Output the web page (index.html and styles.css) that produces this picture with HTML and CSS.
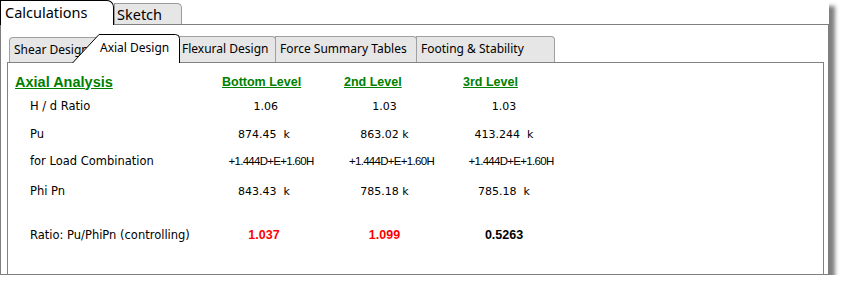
FILE: index.html
```html
<!DOCTYPE html>
<html>
<head>
  <meta charset="UTF-8" />
  <title>Calculations - Axial Design</title>
  <link rel="stylesheet" href="styles.css">
</head>
<body>

  <div class="window">
    <div class="maintabs">
      <div class="maintab actiu">Calculations</div>
      <div class="maintab">Sketch</div>
    </div>

    <div class="marc">
      <div class="subtabs">
        <div class="subtab primer">Shear Design</div>
        <div class="subtab actiu">Axial Design</div>
        <div class="subtab flex">Flexural Design</div>
        <div class="subtab force">Force Summary Tables</div>
        <div class="subtab footing">Footing &amp; Stability</div>
      </div>

      <div class="panell">
        <div class="graella">
          <div class="titol">Axial Analysis</div>
          <div class="cap">Bottom Level</div>
          <div class="cap">2nd Level</div>
          <div class="cap">3rd Level</div>

          <div class="etiqueta">H / d Ratio</div>
          <div class="valor">&nbsp;1.06</div>
          <div class="valor">1.03</div>
          <div class="valor">1.03</div>

          <div class="etiqueta">Pu</div>
          <div class="valor">874.45&nbsp; k</div>
          <div class="valor">863.02 k</div>
          <div class="valor">413.244&nbsp; k</div>

          <div class="etiqueta">for Load Combination</div>
          <div class="valor combo">+1.444D+E+1.60H</div>
          <div class="valor combo">+1.444D+E+1.60H</div>
          <div class="valor combo">+1.444D+E+1.60H</div>

          <div class="etiqueta">Phi Pn</div>
          <div class="valor">843.43&nbsp; k</div>
          <div class="valor">785.18 k</div>
          <div class="valor">785.18&nbsp; k</div>

          <div class="etiqueta">Ratio: Pu/PhiPn (controlling)</div>
          <div class="valor ratio vermell">1.037</div>
          <div class="valor ratio vermell">1.099</div>
          <div class="valor ratio">0.5263</div>
        </div>
      </div>
    </div>
  </div>

</body>
</html>
```

FILE: styles.css
```css
body {
  margin: 0;
  background-color: #fff;
  font-family: "Noto Sans", sans-serif;
  color: #000;
}
.window {
  width: 829px;
  height: 275px;
  background-color: #fff;
  box-shadow: 6px 6px 4px rgba(0, 0, 0, 0.5);
}
.maintabs {
  display: flex;
  align-items: flex-end;
  height: 24px;
}
.maintab {
  box-sizing: border-box;
  width: 68px;
  height: 21px;
  padding-left: 2px;
  background-color: #e6e6e6;
  border: 1px solid #9a9a9a;
  border-bottom: none;
  border-top-right-radius: 5px;
  font-size: 14.5px;
  line-height: 20px;
}
.maintab.actiu {
  position: relative;
  z-index: 2;
  width: 114px;
  height: 25px;
  margin-bottom: -1px;
  padding-left: 4px;
  background-color: #fff;
  border-color: #000;
  border-top-right-radius: 7px;
  line-height: 23px;
}
.marc {
  box-sizing: border-box;
  height: 251px;
  padding: 9px 4px 0 6px;
  border: 1px solid #7f7f7f;
}
.subtabs {
  display: flex;
  align-items: flex-end;
  height: 28px;
  padding-left: 2px;
}
.subtab {
  box-sizing: border-box;
  height: 26px;
  margin-left: -1px;
  padding-left: 3px;
  background-color: #e6e6e6;
  border: 1px solid #a0a0a0;
  border-bottom: none;
  border-top-right-radius: 4px;
  font-size: 12px;
  line-height: 24px;
  white-space: nowrap;
  overflow: hidden;
}
.subtab.primer {
  width: 93px;
  height: 25px;
  margin-left: 0;
  padding-left: 4px;
  border-top-left-radius: 4px;
}
.subtab.actiu {
  position: relative;
  z-index: 2;
  width: 108px;
  height: 29px;
  margin-left: -30px;
  margin-bottom: -1px;
  padding-left: 28px;
  border: none;
  background: url("data:image/svg+xml,%3Csvg xmlns='http://www.w3.org/2000/svg' width='108' height='29'%3E%3Cpath d='M0.5 29 L27 0.5 H103.5 Q107.5 0.5 107.5 4.5 V29' fill='white' stroke='black'/%3E%3C/svg%3E") no-repeat;
  line-height: 27px;
}
.subtab.flex {
  width: 97px;
  padding-left: 2px;
}
.subtab.force {
  width: 142px;
  padding-left: 4px;
}
.subtab.footing {
  width: 139px;
  padding-left: 4px;
}
.panell {
  box-sizing: border-box;
  height: 212px;
  padding: 8px 0 0 7px;
  border: 1px solid #828282;
  border-bottom: none;
}
.graella {
  display: grid;
  grid-template-columns: 207px 122px 119px 120px;
  grid-template-rows: 21px 28px 28px 26px 34px 54px;
  align-items: center;
}
.titol {
  font-family: "Liberation Sans", Arial, sans-serif;
  font-size: 14.5px;
  font-weight: bold;
  color: #008000;
  text-decoration: underline;
}
.cap {
  font-family: "Liberation Sans", Arial, sans-serif;
  font-size: 12.5px;
  font-weight: bold;
  color: #008000;
  text-decoration: underline;
}
.etiqueta {
  padding-left: 15px;
  font-family: "DejaVu Sans", sans-serif;
  font-size: 11.5px;
  white-space: nowrap;
}
.valor {
  padding-right: 38px;
  text-align: center;
  font-family: "DejaVu Sans", sans-serif;
  font-size: 11px;
  white-space: nowrap;
}
.combo {
  padding-right: 24px;
  font-family: "Liberation Sans Narrow", "Liberation Sans", sans-serif;
  font-stretch: condensed;
  font-size: 11.5px;
  letter-spacing: -0.7px;
}
.ratio {
  font-family: "Liberation Sans", Arial, sans-serif;
  font-size: 12.5px;
  font-weight: bold;
}
.vermell {
  color: #ff0000;
}
```
